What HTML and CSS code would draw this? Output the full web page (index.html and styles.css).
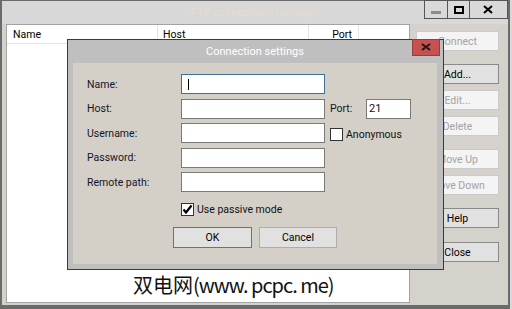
FILE: index.html
```html
<!DOCTYPE html>
<html>
<head>
<meta charset="utf-8">
<link rel="stylesheet" href="styles.css">
</head>
<body>
<div class="window">
  <div class="titlebar">
    <div class="spacer"></div>
    <div class="title">FTP connections manager</div>
    <div class="controls">
      <span class="ctl ctl-min"><svg width="22" height="17" viewBox="0 0 22 17"><rect x="6" y="10" width="10" height="3" fill="#8c8c8c"/></svg></span>
      <span class="ctl ctl-max"><svg width="21" height="17" viewBox="0 0 21 17"><rect x="7" y="6" width="8" height="6" fill="none" stroke="#000" stroke-width="2"/></svg></span>
      <span class="ctl ctl-close"><svg width="37" height="17" viewBox="0 0 37 17"><path d="M14 5 L22 12 M22 5 L14 12" stroke="#000" stroke-width="2"/></svg></span>
    </div>
  </div>
  <div class="client">
    <div class="list">
      <div class="list-header">
        <div class="col col-name">Name</div>
        <div class="col col-host">Host</div>
        <div class="col col-port">Port</div>
      </div>
      <div class="watermark">双电网<span class="wm-latin">(www. pcpc. me)</span></div>
    </div>
    <div class="side">
      <button class="btn off">Connect</button>
      <button class="btn gap">Add...</button>
      <button class="btn off">Edit...</button>
      <button class="btn off">Delete</button>
      <button class="btn off gap">Move Up</button>
      <button class="btn off">Move Down</button>
      <button class="btn gap">Help</button>
      <button class="btn gap2">Close</button>
    </div>
  </div>
</div>

<div class="dialog">
  <div class="dlg-title">
    <span>Connection settings</span>
    <span class="dlg-close"><svg width="28" height="17" viewBox="0 0 28 17"><path d="M10 5 L18 11 M18 5 L10 11" stroke="#1a1a1a" stroke-width="2"/></svg></span>
  </div>
  <div class="dlg-body">
    <div class="form">
      <label class="lbl">Name:</label>
      <div class="input focus"><span class="caret"></span></div>
      <div></div><div></div><div></div>

      <label class="lbl">Host:</label>
      <div class="input"></div>
      <div></div>
      <label class="lbl">Port:</label>
      <div class="input port">21</div>

      <label class="lbl">Username:</label>
      <div class="input"></div>
      <div></div>
      <div class="anon"><span class="check"></span><span>Anonymous</span></div>

      <label class="lbl">Password:</label>
      <div class="input"></div>
      <div></div><div></div><div></div>

      <label class="lbl">Remote path:</label>
      <div class="input"></div>
      <div></div><div></div><div></div>
    </div>
    <div class="passive">
      <span class="check checked"><svg width="11" height="11" viewBox="0 0 11 11"><path d="M1.5 5.5 L4 8.5 L9.5 1.5" fill="none" stroke="#000" stroke-width="2.2"/></svg></span>
      <span>Use passive mode</span>
    </div>
    <div class="dlg-buttons">
      <button class="dbtn default">OK</button>
      <button class="dbtn">Cancel</button>
    </div>
  </div>
</div>
</body>
</html>
```
FILE: styles.css
```css
html, body {
  margin: 0;
  padding: 0;
}
body {
  width: 512px;
  height: 309px;
  overflow: hidden;
  background: #d8d8d8;
  font-family: Roboto, "Noto Sans", sans-serif;
  font-size: 10.5px;
  color: #111;
  position: relative;
}
.window {
  box-sizing: border-box;
  width: 510px;
  height: 309px;
  border: 2px solid #6b6b6b;
  border-top-width: 1px;
  border-bottom-width: 4px;
  background: #d8d8d8;
  display: flex;
  flex-direction: column;
}
.titlebar {
  height: 23px;
  display: grid;
  grid-template-columns: 1fr auto 1fr;
  align-items: start;
}
.title {
  font-size: 11px;
  line-height: 23px;
  color: #e4ddcc;
  align-self: center;
}
.controls {
  justify-self: end;
  display: flex;
  margin-top: -1px;
  border: 1px solid #555;
  background: #d9d9d9;
}
.ctl {
  display: block;
  height: 17px;
}
.ctl svg { display: block; }
.ctl-min { width: 22px; }
.ctl-max { width: 21px; border-left: 1px solid #555; }
.ctl-close { width: 37px; border-left: 1px solid #555; }
.client {
  flex: 1;
  display: flex;
  gap: 6px;
  padding: 0 0 2px 4px;
  background: #d5d2cc;
}
.list {
  position: relative;
  box-sizing: border-box;
  width: 404px;
  border: 1px solid #a3a3a3;
  background: #fff;
}
.list-header {
  display: flex;
  height: 18px;
  border-bottom: 1px solid #e3e3e3;
}
.col {
  box-sizing: border-box;
  border-right: 1px solid #e3e3e3;
  line-height: 20px;
  color: #000;
}
.col-name { width: 151px; padding-left: 6px; }
.col-host { width: 151px; padding-left: 5px; }
.col-port { width: 50px; text-align: right; padding-right: 6px; }
.watermark {
  position: absolute;
  left: 126px;
  top: 250px;
  font-family: "Noto Sans CJK SC", sans-serif;
  font-size: 20px;
  line-height: 20px;
  color: #111;
  white-space: nowrap;
}
.wm-latin {
  letter-spacing: -1px;
}
.side {
  width: 83px;
  padding-top: 7px;
  display: flex;
  flex-direction: column;
  gap: 6px;
}
.btn {
  box-sizing: border-box;
  height: 20px;
  margin: 0;
  padding: 0;
  font: inherit;
  color: #000;
  background: #e1e1e1;
  border: 1px solid #8a8a8a;
}
.btn.off {
  background: #f4f4f4;
  border-color: #cacaca;
  color: #a3a3a3;
}
.btn.gap { margin-top: 7px; }
.btn.gap2 { margin-top: 8px; }
.dialog {
  position: absolute;
  left: 67px;
  top: 39px;
  width: 377px;
  height: 231px;
  box-sizing: border-box;
  border: 1px solid #3a3a3a;
  background: #bfbfbf;
  padding: 0 6px 5px 5px;
  display: flex;
  flex-direction: column;
}
.dlg-title {
  height: 23px;
  display: flex;
  align-items: center;
  justify-content: center;
  color: #fff;
  font-size: 11px;
}
.dlg-close {
  position: absolute;
  top: -1px;
  right: 3px;
  width: 28px;
  height: 17px;
  background: #c75050;
  box-shadow: inset 0 0 0 1px #9a3c3c;
}
.dlg-close svg { display: block; }
.dlg-body {
  flex: 1;
  background: #d4d0c8;
  border-top: 1px solid #cfd2d6;
  display: flex;
  flex-direction: column;
}
.form {
  margin: 10px 0 0 14px;
  display: grid;
  grid-template-columns: 94px 144px 5px 36px 45px;
  grid-auto-rows: 20px;
  row-gap: 4.5px;
  align-items: center;
}
.lbl {
  color: #141428;
}
.input {
  box-sizing: border-box;
  height: 20px;
  border: 1px solid #7a7a7a;
  background: #fff;
  position: relative;
}
.input.focus { border-color: #3c70a0; }
.caret {
  position: absolute;
  left: 6px;
  top: 4px;
  width: 1px;
  height: 11px;
  background: #000;
}
.input.port {
  padding-left: 2px;
  line-height: 18px;
  font-size: 11px;
}
.anon {
  grid-column: 4 / 6;
  display: flex;
  align-items: center;
  gap: 3px;
  margin-top: 3px;
  white-space: nowrap;
}
.check {
  box-sizing: border-box;
  width: 13px;
  height: 13px;
  border: 1px solid #333;
  background: #fff;
  display: block;
  flex: none;
}
.check svg { display: block; }
.passive {
  margin: 11px 0 0 108px;
  display: flex;
  align-items: center;
  gap: 3px;
  height: 13px;
}
.dlg-buttons {
  margin-top: 11px;
  display: flex;
  justify-content: center;
  gap: 7px;
}
.dbtn {
  box-sizing: border-box;
  width: 79px;
  height: 21px;
  margin: 0;
  padding: 0;
  font: inherit;
  color: #000;
  background: #e1e1e1;
  border: 1px solid #adadad;
}
.dbtn + .dbtn { width: 78px; }
.dbtn.default { border-color: #3c7fb1; }
```
